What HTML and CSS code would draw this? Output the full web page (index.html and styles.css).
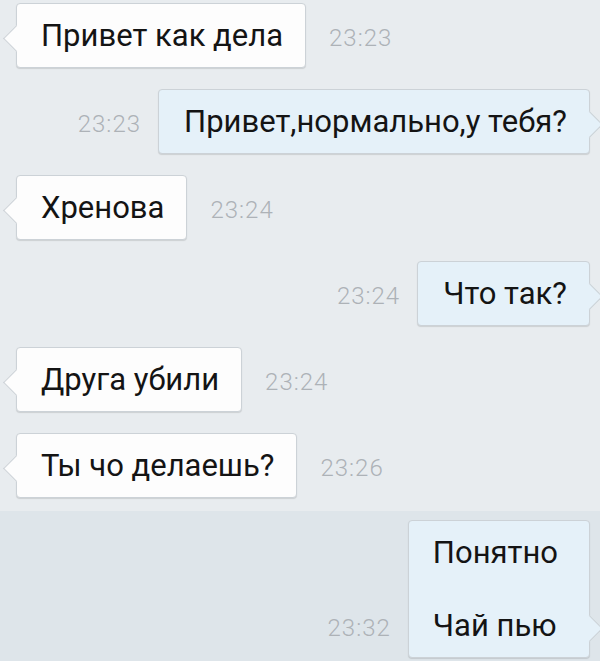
FILE: index.html
```html
<!DOCTYPE html>
<html lang="ru">
<head>
<meta charset="utf-8">
<link rel="stylesheet" href="styles.css">
</head>
<body>
<div class="chat">
  <div class="row in"><div class="bubble">Привет как дела</div><span class="time">23:23</span></div>
  <div class="row out"><span class="time">23:23</span><div class="bubble">Привет,нормально,у тебя?</div></div>
  <div class="row in"><div class="bubble">Хренова</div><span class="time">23:24</span></div>
  <div class="row out"><span class="time">23:24</span><div class="bubble">Что так?</div></div>
  <div class="row in"><div class="bubble">Друга убили</div><span class="time">23:24</span></div>
  <div class="row in"><div class="bubble">Ты чо делаешь?</div><span class="time">23:26</span></div>
</div>
<div class="chat unread">
  <div class="row out"><span class="time">23:32</span><div class="bubble multi"><p class="line">Понятно</p><p class="line">Чай пью</p></div></div>
</div>
</body>
</html>
```
FILE: styles.css
```css
html, body {
  margin: 0;
  padding: 0;
}
body {
  width: 600px;
  height: 661px;
  overflow: hidden;
  display: flex;
  flex-direction: column;
  background: #e8ecef;
  font-family: Roboto, "Noto Sans", sans-serif;
}
.chat {
  display: flex;
  flex-direction: column;
  gap: 21px;
  padding: 3px 0 0 0;
}
.chat.unread {
  flex: 1;
  min-height: 0;
  overflow: hidden;
  margin-top: 13px;
  padding-top: 9px;
  background: #dee5ea;
}
.row {
  display: flex;
  align-items: flex-end;
  flex-shrink: 0;
}
.row.in {
  padding-left: 16px;
  gap: 23px;
}
.row.out {
  justify-content: flex-end;
  padding-right: 10px;
  gap: 17px;
}
.bubble {
  position: relative;
  font-size: 31px;
  line-height: 33px;
  color: #141414;
  padding: 15px 22px 15px 24px;
  border: 1px solid #ccd2d7;
  border-radius: 4px;
  box-shadow: 0 1px 1px rgba(0, 0, 0, 0.12);
}
.in .bubble {
  background: #fdfdfd;
}
.out .bubble {
  background: #e5f1f9;
  padding: 15px 22px 15px 25px;
}
.out .bubble.multi {
  padding: 15px 31px 15px 24px;
}
.bubble::before {
  content: "";
  position: absolute;
  width: 18px;
  height: 18px;
  bottom: 19px;
  transform: rotate(45deg);
}
.in .bubble::before {
  left: -10px;
  background: #fdfdfd;
  border-left: 1px solid #ccd2d7;
  border-bottom: 1px solid #ccd2d7;
}
.out .bubble::before {
  right: -10px;
  background: #e5f1f9;
  border-right: 1px solid #ccd2d7;
  border-top: 1px solid #ccd2d7;
}
.line {
  margin: 0;
}
.line + .line {
  margin-top: 40px;
}
.time {
  font-size: 24px;
  font-weight: 300;
  color: #adb2b7;
  margin-bottom: 16px;
  letter-spacing: 1px;
}
```
